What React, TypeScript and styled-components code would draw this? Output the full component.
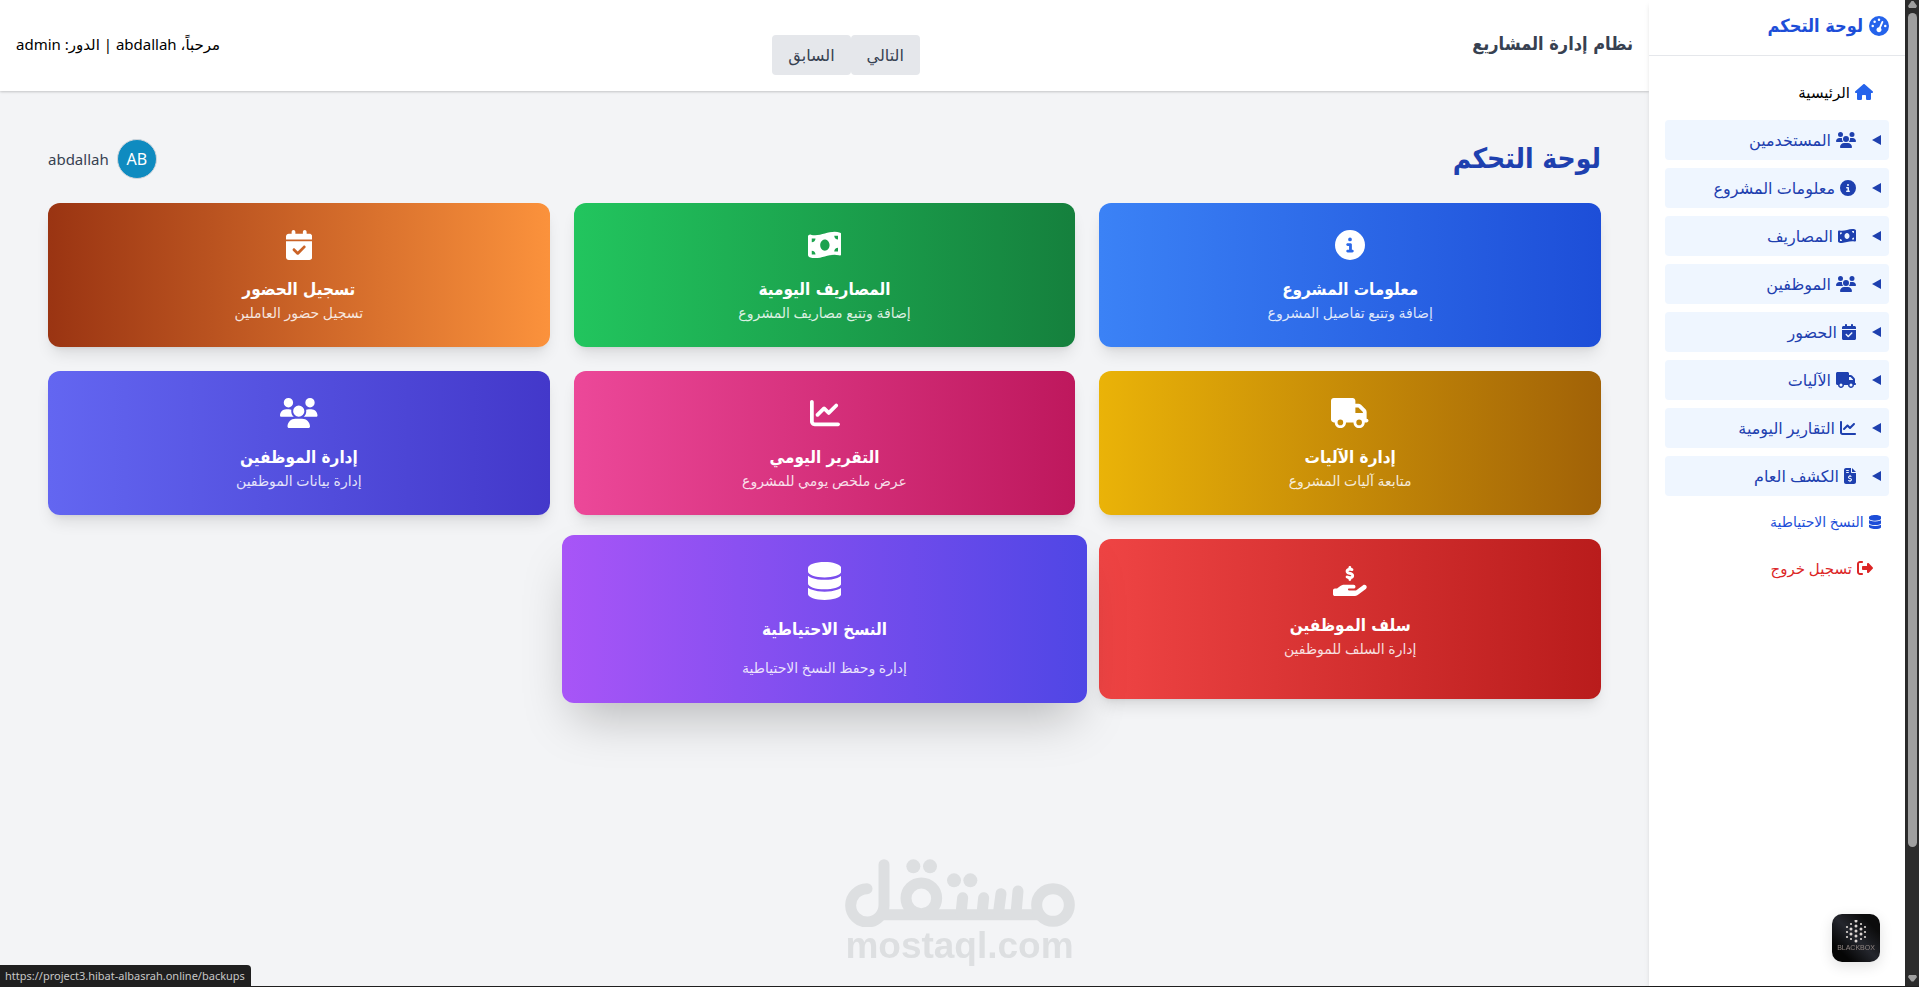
import React from "react";
import styled, { createGlobalStyle, css } from "styled-components";
import type { IconType } from "react-icons";
import {
  FaCalendarCheck,
  FaChartLine,
  FaCircleInfo,
  FaDatabase,
  FaFileInvoiceDollar,
  FaGaugeHigh,
  FaHandHoldingDollar,
  FaHouse,
  FaMoneyBillWave,
  FaRightFromBracket,
  FaTruck,
  FaUsers,
} from "react-icons/fa6";

const headingFont = `"DejaVu Sans Condensed", "DejaVu Sans", sans-serif`;

const GlobalStyle = createGlobalStyle`
  *, *::before, *::after { box-sizing: border-box; }
  body {
    margin: 0;
    background: #f3f4f6;
    color: #000;
    font-family: "Noto Sans", "DejaVu Sans", sans-serif;
    font-size: 16px;
    line-height: 24px;
  }
  h1, h2, h3, p { margin: 0; }
  h1, h2, h3 { font-family: ${headingFont}; }
  a { color: inherit; text-decoration: none; }
  button { font: inherit; color: inherit; border: 0; cursor: pointer; }
  svg { display: block; flex-shrink: 0; }
`;

/* ---------- page frame ---------- */

const Page = styled.div`
  display: flex;
  min-height: 100vh;
  white-space: nowrap;
  border-bottom: 1px solid #1f1f1f;
`;

const Content = styled.div`
  flex: 1;
  min-width: 0;
`;

const ScrollTrack = styled.div`
  display: flex;
  flex-direction: column;
  align-items: center;
  justify-content: space-between;
  width: 14px;
  padding: 1px 2px 4px 3px;
  background: #2c2c2c;
`;

const ScrollThumb = styled.div`
  flex: 1;
  width: 9px;
  margin: 5px 0 128px;
  border-radius: 5px;
  background: #9f9f9f;
`;

/* Sized by its font-size; the width follows the glyph's own box (512 = square). */
const Glyph = styled.span<{ $box?: number }>`
  display: flex;

  svg {
    width: calc(1em * ${(p) => p.$box ?? 512} / 512);
    height: 1em;
  }
`;

/* ---------- sidebar ---------- */

const Sidebar = styled.aside`
  z-index: 1;
  width: 256px;
  background: #fff;
  box-shadow: 0 4px 6px -1px rgba(0, 0, 0, 0.1), 0 2px 4px -2px rgba(0, 0, 0, 0.1);
`;

const Brand = styled.div`
  display: flex;
  align-items: center;
  gap: 6px;
  height: 56px;
  padding: 0 16px 4px;
  border-bottom: 1px solid #e5e7eb;
  color: #2563eb;
  font-size: 20px;
`;

const BrandName = styled.h2`
  color: #1d4ed8;
  font-size: 18px;
  line-height: 28px;
  font-weight: 700;
`;

const Nav = styled.nav`
  display: flex;
  flex-direction: column;
  gap: 8px;
  padding: 16px;
`;

const NavIcon = styled(Glyph)<{ $tone?: string }>`
  color: ${(p) => p.$tone ?? "inherit"};
  font-size: 16px;
`;

const NavLink = styled.a<{ $tone: string; $small?: boolean }>`
  display: flex;
  align-items: center;
  gap: 5px;
  height: ${(p) => (p.$small ? 36 : 40)}px;
  padding: 0 ${(p) => (p.$small ? 8 : 16)}px;
  color: ${(p) => p.$tone};
  font-size: ${(p) => (p.$small ? 14 : 15)}px;

  ${NavIcon} {
    font-size: ${(p) => (p.$small ? 14 : 16)}px;
  }
`;

const NavGroup = styled.button`
  display: flex;
  align-items: center;
  gap: 16px;
  height: 40px;
  padding: 0 8px;
  border-radius: 4px;
  background: #eff6ff;
  color: #1e40af;
  font-size: 16px;
`;

const NavLabel = styled.span`
  display: flex;
  align-items: center;
  gap: 5px;
`;

/* ---------- top bar ---------- */

const TopBar = styled.header`
  display: flex;
  align-items: center;
  justify-content: space-between;
  padding: 16px;
  background: #fff;
  box-shadow: 0 1px 3px rgba(0, 0, 0, 0.1), 0 1px 2px rgba(0, 0, 0, 0.1);
`;

const SystemName = styled.h2`
  padding-bottom: 4px;
  color: #374151;
  font-size: 18px;
  line-height: 28px;
  font-weight: 600;
`;

const Pager = styled.div`
  display: flex;
  padding-top: 19px;
`;

const PagerButton = styled.button`
  height: 40px;
  padding: 0 16px;
  border-radius: 4px;
  background: #e5e7eb;
  color: #374151;
  font-size: 16px;
`;

const Greeting = styled.p`
  padding-bottom: 4px;
  font-size: 15px;
`;

/* ---------- dashboard ---------- */

const Main = styled.main`
  padding: 48px;
`;

const TitleRow = styled.div`
  display: flex;
  align-items: center;
  justify-content: space-between;
  height: 40px;
  margin-bottom: 24px;
`;

const Title = styled.h1`
  color: #1e40af;
  font-size: 28px;
  line-height: 36px;
  font-weight: 700;
`;

const User = styled.div`
  display: flex;
  align-items: center;
  gap: 8px;
  color: #374151;
  font-size: 15px;
`;

const Avatar = styled.span`
  display: flex;
  align-items: center;
  justify-content: center;
  width: 40px;
  height: 40px;
  border: 1px solid #d1d5db;
  border-radius: 50%;
  background: #0f8bc0;
  color: #fff;
  font-size: 16px;
`;

const CardGrid = styled.div`
  display: grid;
  grid-template-columns: repeat(3, 1fr);
  gap: 24px;
`;

const CardTitle = styled.h3`
  font-size: 17px;
  line-height: 28px;
  font-weight: 600;
`;

const CardNote = styled.p`
  color: rgba(255, 255, 255, 0.85);
  font-size: 14px;
  line-height: 20px;
`;

const CardIcon = styled(Glyph)`
  align-items: center;
  height: 36px;
  margin-bottom: 12px;
  font-size: 30px;
`;

const raised = css`
  z-index: 1;
  margin: -4px -12px;
  padding: 25px;
  box-shadow: 0 25px 50px -12px rgba(0, 0, 0, 0.25);

  ${CardIcon} {
    height: 42px;
    margin-bottom: 13px;
    font-size: 38px;
  }
  ${CardTitle} {
    margin-bottom: 13px;
    line-height: 29px;
    font-weight: 700;
  }
  ${CardNote} {
    line-height: 21px;
  }
`;

const Card = styled.a<{ $from: string; $to: string; $raised?: boolean }>`
  display: flex;
  flex-direction: column;
  align-items: center;
  padding: 24px;
  border-radius: 12px;
  background: linear-gradient(to right, ${(p) => p.$from}, ${(p) => p.$to});
  box-shadow: 0 10px 15px -3px rgba(0, 0, 0, 0.1), 0 4px 6px -4px rgba(0, 0, 0, 0.1);
  color: #fff;
  ${(p) => p.$raised && raised}
`;

/* ---------- floating pieces ---------- */

const Watermark = styled.div`
  position: fixed;
  z-index: 2;
  right: 0;
  bottom: 22px;
  left: 0;
  display: flex;
  flex-direction: column;
  align-items: center;
  color: #dddfe1;
  font-family: "Liberation Sans", sans-serif;
  font-size: 37px;
  font-weight: 700;
  line-height: 38px;
  pointer-events: none;
`;

const ChatButton = styled.button`
  position: fixed;
  z-index: 3;
  right: 39px;
  bottom: 25px;
  display: flex;
  flex-direction: column;
  align-items: center;
  width: 48px;
  height: 48px;
  padding: 6px 0 0;
  border-radius: 10px;
  background: linear-gradient(45deg, #050505 20%, #24262d 50%, #0c0c0c 80%);
  box-shadow: 0 4px 14px rgba(0, 0, 0, 0.12);
  color: #8f8480;
  font-family: "Liberation Sans", sans-serif;
  font-size: 7px;
  line-height: 10px;
`;

const StatusBar = styled.div`
  position: fixed;
  z-index: 3;
  bottom: 0;
  left: 0;
  height: 22px;
  padding: 0 6px 0 5px;
  border-radius: 0 4px 0 0;
  background: #1f1f1f;
  color: #c7c7c7;
  font-family: "Noto Sans", sans-serif;
  font-size: 11px;
  line-height: 21px;
  white-space: nowrap;
`;

/* ---------- data ---------- */

type IconSpec = { icon: IconType; box?: number };

const users: IconSpec = { icon: FaUsers, box: 640 };
const info: IconSpec = { icon: FaCircleInfo };
const money: IconSpec = { icon: FaMoneyBillWave, box: 576 };
const calendar: IconSpec = { icon: FaCalendarCheck, box: 448 };
const truck: IconSpec = { icon: FaTruck, box: 640 };
const chart: IconSpec = { icon: FaChartLine };
const invoice: IconSpec = { icon: FaFileInvoiceDollar, box: 384 };
const hand: IconSpec = { icon: FaHandHoldingDollar, box: 576 };
const database: IconSpec = { icon: FaDatabase, box: 448 };

const groups: { label: string; glyph: IconSpec }[] = [
  { label: "المستخدمين", glyph: users },
  { label: "معلومات المشروع", glyph: info },
  { label: "المصاريف", glyph: money },
  { label: "الموظفين", glyph: users },
  { label: "الحضور", glyph: calendar },
  { label: "الآليات", glyph: truck },
  { label: "التقارير اليومية", glyph: chart },
  { label: "الكشف العام", glyph: invoice },
];

type CardData = {
  title: string;
  note: string;
  glyph: IconSpec;
  from: string;
  to: string;
  raised?: boolean;
};

const cards: CardData[] = [
  { title: "معلومات المشروع", note: "إضافة وتتبع تفاصيل المشروع", glyph: info, from: "#3b82f6", to: "#1d4ed8" },
  { title: "المصاريف اليومية", note: "إضافة وتتبع مصاريف المشروع", glyph: money, from: "#22c55e", to: "#15803d" },
  { title: "تسجيل الحضور", note: "تسجيل حضور العاملين", glyph: calendar, from: "#9a3412", to: "#fb923c" },
  { title: "إدارة الآليات", note: "متابعة آليات المشروع", glyph: truck, from: "#eab308", to: "#a16207" },
  { title: "التقرير اليومي", note: "عرض ملخص يومي للمشروع", glyph: chart, from: "#ec4899", to: "#be185d" },
  { title: "إدارة الموظفين", note: "إدارة بيانات الموظفين", glyph: users, from: "#6366f1", to: "#4338ca" },
  { title: "سلف الموظفين", note: "إدارة السلف للموظفين", glyph: hand, from: "#ef4444", to: "#b91c1c" },
  { title: "النسخ الاحتياطية", note: "إدارة وحفظ النسخ الاحتياطية", glyph: database, from: "#a855f7", to: "#4f46e5", raised: true },
];

/* Columns of the dotted chat mark: x, then the y of each dot. */
const dotColumns: [number, number[]][] = [
  [2, [7, 12, 17]],
  [6, [4, 9, 14, 19]],
  [11, [1, 6, 11, 16, 21]],
  [16, [4, 9, 14, 19]],
  [20, [7, 12, 17]],
];

/* ---------- drawings ---------- */

const Arrow = ({ down }: { down?: boolean }) => (
  <svg width="9" height="7" viewBox="0 0 9 7" aria-hidden="true">
    <path
      d={down ? "M1 0h7l1 2-3.500 4.500h-2L0 2z" : "M3.500 0h2L9 5 8 7H1L0 5z"}
      fill="#9f9f9f"
    />
  </svg>
);

const Caret = () => (
  <svg width="9" height="10" viewBox="0 0 9 10" aria-hidden="true">
    <path d="M9 0v10L0 5z" fill="currentColor" />
  </svg>
);

const WatermarkLogo = () => (
  <svg width="230" height="68" viewBox="72 62 690 204" aria-hidden="true">
    <g fill="none" stroke="currentColor" strokeWidth="33" strokeLinecap="round">
      <path d="M189 79V200A50 50 0 1 1 138 151" />
      <path d="M185 229H655" strokeLinecap="butt" />
      <circle cx="301" cy="180" r="46" />
      <circle cx="696" cy="200" r="49" />
      <path d="M425 178L420 226M488 178L483 226M540 166L532 226M591 158L585 226" />
    </g>
    <g fill="currentColor">
      <circle cx="277" cy="84" r="21" />
      <circle cx="327" cy="84" r="21" />
      <circle cx="399" cy="126" r="21" />
      <circle cx="448" cy="126" r="21" />
    </g>
  </svg>
);

const DotMark = () => (
  <svg width="22" height="23" viewBox="0 0 22 23" aria-hidden="true">
    {dotColumns.map(([x, ys]) =>
      ys.map((y) => (
        <circle key={`${x}-${y}`} cx={x} cy={y} r={x === 11 || (x > 4 && x < 18 && y > 6 && y < 16) ? 1.5 : 1.1} fill="#ddd6d3" />
      ))
    )}
  </svg>
);

export default function App() {
  return (
    <>
      <GlobalStyle />
      <Page dir="rtl">
        <ScrollTrack aria-hidden="true">
          <Arrow />
          <ScrollThumb />
          <Arrow down />
        </ScrollTrack>

        <Sidebar>
          <Brand>
            <Glyph>
              <FaGaugeHigh />
            </Glyph>
            <BrandName>لوحة التحكم</BrandName>
          </Brand>
          <Nav>
            <NavLink href="#home" $tone="#000">
              <NavIcon $box={576} $tone="#2563eb">
                <FaHouse />
              </NavIcon>
              الرئيسية
            </NavLink>
            {groups.map(({ label, glyph: { icon: Icon, box } }) => (
              <NavGroup key={label} type="button">
                <Caret />
                <NavLabel>
                  <NavIcon $box={box}>
                    <Icon />
                  </NavIcon>
                  {label}
                </NavLabel>
              </NavGroup>
            ))}
            <NavLink href="#backups" $tone="#1d4ed8" $small>
              <NavIcon $box={448}>
                <FaDatabase />
              </NavIcon>
              النسخ الاحتياطية
            </NavLink>
            <NavLink href="#logout" $tone="#dc2626">
              <NavIcon>
                <FaRightFromBracket />
              </NavIcon>
              تسجيل خروج
            </NavLink>
          </Nav>
        </Sidebar>

        <Content>
          <TopBar>
            <SystemName>نظام إدارة المشاريع</SystemName>
            <Pager>
              <PagerButton type="button">التالي</PagerButton>
              <PagerButton type="button">السابق</PagerButton>
            </Pager>
            <Greeting>مرحباً، abdallah | الدور: admin</Greeting>
          </TopBar>

          <Main>
            <TitleRow>
              <Title>لوحة التحكم</Title>
              <User>
                <Avatar>AB</Avatar>
                <span>abdallah</span>
              </User>
            </TitleRow>
            <CardGrid>
              {cards.map(({ title, note, glyph: { icon: Icon, box }, from, to, raised: isRaised }) => (
                <Card key={title} href="#card" $from={from} $to={to} $raised={isRaised}>
                  <CardIcon $box={box}>
                    <Icon />
                  </CardIcon>
                  <CardTitle>{title}</CardTitle>
                  <CardNote>{note}</CardNote>
                </Card>
              ))}
            </CardGrid>
          </Main>
        </Content>
      </Page>

      <Watermark>
        <WatermarkLogo />
        <span>mostaql.com</span>
      </Watermark>
      <ChatButton type="button">
        <DotMark />
        BLACKBOX
      </ChatButton>
      <StatusBar>https://project3.hibat-albasrah.online/backups</StatusBar>
    </>
  );
}
